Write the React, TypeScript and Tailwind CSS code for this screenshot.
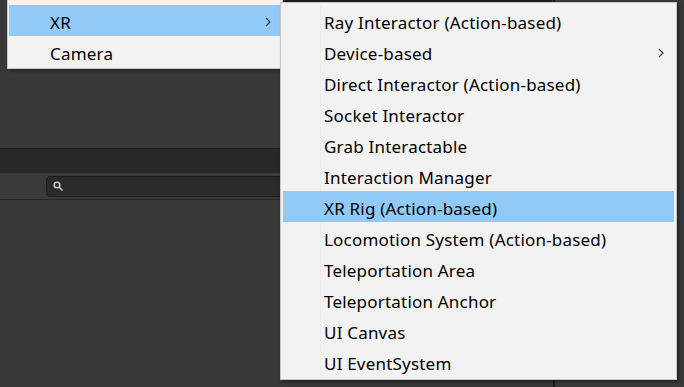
import React from 'react';

const items = [
  'Ray Interactor (Action-based)',
  'Device-based',
  'Direct Interactor (Action-based)',
  'Socket Interactor',
  'Grab Interactable',
  'Interaction Manager',
  'XR Rig (Action-based)',
  'Locomotion System (Action-based)',
  'Teleportation Area',
  'Teleportation Anchor',
  'UI Canvas',
  'UI EventSystem',
];

const Chevron = () => (
  <svg width="6" height="10" viewBox="0 0 6 10" className="absolute right-[10px] top-[12px]">
    <polyline points="1,1 5,5 1,9" fill="none" stroke="#3a3a3a" strokeWidth="1.2" />
  </svg>
);

const MenuRow = ({ label, active, sub }: { label: string; active?: boolean; sub?: boolean }) => (
  <div
    className={`relative h-[31px] pl-[41px] pt-[4px] leading-[27px] text-[17px] tracking-[0.2px] text-black whitespace-nowrap ${
      active ? 'bg-[#91c9f7]' : ''
    }`}
  >
    {label}
    {sub && <Chevron />}
  </div>
);

export default function App() {
  return (
    <div
      className="relative w-[684px] h-[387px] overflow-hidden bg-[#383838]"
      style={{ fontFamily: '"Noto Sans", "Open Sans", sans-serif' }}
    >
      {/* editor panels behind the menus */}
      <div className="flex h-full">
        <div className="flex flex-col w-[553px]">
          <div className="h-[148px] bg-[#383838]" />
          <div className="h-[1px] bg-[#1e1e1e]" />
          <div className="h-[24px] bg-[#282828]" />
          <div className="h-[26px] bg-[#3a3a3a] flex items-center pl-[46px]">
            <div className="flex-1 h-[21px] rounded-l-[4px] bg-[#2a2a2a] border border-[#1c1c1c] flex items-center pl-[6px]">
              <svg width="11" height="11" viewBox="0 0 11 11">
                <circle cx="4" cy="4" r="2.8" fill="none" stroke="#c8c8c8" strokeWidth="1.6" />
                <line x1="6" y1="6" x2="9.5" y2="9.5" stroke="#c8c8c8" strokeWidth="1.6" />
              </svg>
            </div>
          </div>
          <div className="h-[1px] bg-[#262626]" />
          <div className="flex-1 bg-[#383838]" />
        </div>
        <div className="w-[2px] bg-[#1b1b1b]" />
        <div className="flex-1 bg-[#3a3a3a]" />
      </div>
      <div className="absolute left-[285px] top-0 w-[267px] h-[2px] bg-[#1c1c1c]" />

      {/* parent menu */}
      <div className="absolute left-[7px] top-[-2px] w-[276px] border border-[#c8c8c8] bg-[#f2f2f2] pt-[6px] pb-[1px] px-[1px] shadow-[2px_2px_3px_rgba(0,0,0,0.35)]">
        <MenuRow label="XR" active sub />
        <MenuRow label="Camera" />
      </div>

      {/* sub menu */}
      <div className="absolute left-[280px] top-[2px] w-[397px] border border-[#c8c8c8] bg-[#f2f2f2] p-[2px] shadow-[2px_2px_3px_rgba(0,0,0,0.4)]">
        <div className="absolute left-[39px] top-[2px] bottom-[2px] w-[1px] bg-[#ececec]" />
        {items.map((label) => (
          <MenuRow key={label} label={label} active={label === 'XR Rig (Action-based)'} sub={label === 'Device-based'} />
        ))}
      </div>
    </div>
  );
}
